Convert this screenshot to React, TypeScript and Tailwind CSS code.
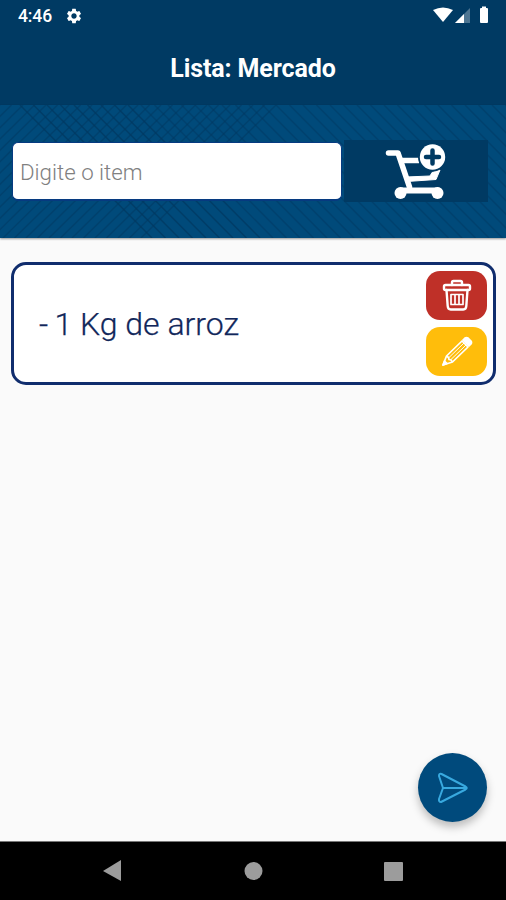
import { MdSettings } from "react-icons/md";

const range = (n: number) => Array.from({ length: n }, (_, i) => i);

function Hatching() {
  return (
    <svg className="absolute inset-0 h-full w-full" viewBox="0 0 506 133" preserveAspectRatio="none" fill="none" stroke="#003a63" strokeWidth="1.4" aria-hidden="true">
      <g opacity="0.55">
        {range(25).map((i) => (
          <path key={i} d={`M${i * 11.5} 0l-135 133`} />
        ))}
      </g>
      <g opacity="0.8">
        {range(9).map((i) => (
          <path key={i} d={`M${i * 13.5 + 20} 0l132 133`} />
        ))}
      </g>
      <g opacity="0.5">
        {range(28).map((i) => (
          <path key={i} d={`M${i * 13.5 + 141} 0l132 133`} />
        ))}
      </g>
    </svg>
  );
}

function StatusBar() {
  return (
    <div className="flex h-8 items-center justify-between pl-[18px] pr-4">
      <div className="flex items-center gap-[13px]">
        <span className="text-[17.5px] leading-8 font-medium tracking-[-0.1px]">4:46</span>
        <MdSettings className="h-[18px] w-[18px]" />
      </div>
      <svg className="h-5 w-[58px]" viewBox="0 0 58 20" fill="currentColor">
        <path d="M1 4Q11 -1 21 4L11 16Z" />
        <path d="M38 2V17H23Z" opacity=".3" />
        <path d="M32 8V17H23Z" />
        <path d="M49 2h1V.5h4V2h1q1 0 1 1v13q0 1-1 1h-6q-1 0-1-1V3q0-1 1-1Z" />
      </svg>
    </div>
  );
}

function CartIcon() {
  return (
    <svg className="h-[60px] w-[64px]" viewBox="0 0 64 60" fill="none" stroke="white" strokeWidth="5.5" strokeLinecap="round" strokeLinejoin="round">
      <path d="M4.500 12H14L25.500 46" />
      <path d="M17 19.500H35" strokeLinecap="butt" />
      <path d="M22 36L46 35L48 31.500L56 29L52 38.500L23 40.500Z" strokeWidth="1" fill="white" />
      <path d="M17 49.500H54" strokeWidth="6" />
      <circle cx="16.500" cy="52" r="6" fill="white" stroke="none" />
      <circle cx="53.500" cy="52" r="6" fill="white" stroke="none" />
      <circle cx="48.500" cy="16" r="14.500" fill="#003a63" stroke="none" />
      <circle cx="48.500" cy="16" r="12.700" fill="white" stroke="none" />
      <path d="M48.500 9.500v13M42 16h13" stroke="#003a63" strokeWidth="4.500" />
    </svg>
  );
}

function TrashIcon() {
  return (
    <svg className="h-8 w-8" viewBox="0 0 32 32" fill="none" stroke="white" strokeWidth="2.4" strokeLinecap="round" strokeLinejoin="round">
      <rect x="3" y="6" width="26" height="5" rx="1.5" />
      <path d="M11 6V3.500Q11 2 12.500 2h7Q21 2 21 3.500V6" />
      <path d="M5.500 11l1.200 16q.2 3.500 3 3.500h12.600q2.800 0 3-3.500l1.200-16" />
      <path d="M10 15.500v10h12v-10ZM14 15.500v10M18 15.500v10" strokeWidth="1.700" />
    </svg>
  );
}

function PencilIcon() {
  return (
    <svg className="h-8 w-8" viewBox="0 0 32 32" fill="none" stroke="white" strokeWidth="1.7" strokeLinejoin="round">
      <path d="M2 30l3.500-9L21 6l6 6L11.500 27Z" />
      <path d="M2 30l1.500-4 2.500 2.500Z" fill="white" />
      <path d="M5.500 21l2 1.500.5 2 2 .5 1.500 2" />
      <path d="M22 5l2-2q1.500-1 3 0l3 3q1 1.500 0 3l-2 2Z" fill="white" />
      <path d="M8 22.500L23 8M10 24.500L25 10" strokeWidth="1" />
    </svg>
  );
}

export default function App() {
  return (
    <div className="relative flex h-[900px] w-[506px] flex-col overflow-hidden bg-[#fafafa] font-[Roboto,sans-serif]">
      <header className="h-[105px] shrink-0 bg-[#003a63] text-white">
        <StatusBar />
        <h1 className="pt-[22px] text-center text-[25px] leading-[30px] font-bold tracking-[-0.1px]">Lista: Mercado</h1>
      </header>
      <section className="relative h-[133px] shrink-0 bg-[#004a7a] shadow-[0_1px_2px_rgba(0,0,0,0.4)]">
        <Hatching />
        <div className="relative flex items-start pt-[35px] pl-3">
          <input aria-label="Item" placeholder="Digite o item" className="mt-[2px] h-[59px] w-[330px] rounded-[6px] border border-b-2 border-[#063a80] bg-white px-[7px] pt-[2px] text-[22.3px] font-light outline-none placeholder:text-[#808080]" />
          <button aria-label="Adicionar item" className="ml-[2px] flex h-[62px] w-[144px] items-center justify-center bg-[#003a63]"><CartIcon /></button>
        </div>
      </section>
      <main className="flex-1 pt-6 pr-[10px] pl-[11px]">
        <article className="flex h-[123px] items-center justify-between rounded-[15px] border-[3px] border-[#102d6d] bg-white pr-[6px] pl-[25px]">
          <p className="pt-px text-[32px] leading-10 font-light text-[#11275b] [-webkit-text-stroke:0.25px_#11275b]"><span className="tracking-[-0.8px]">- </span>1 Kg de arroz</p>
          <div className="flex flex-col gap-[7px]">
            <button aria-label="Excluir" className="flex h-[49px] w-[61px] items-center justify-center rounded-[14px] bg-[#bf3028] pb-px"><TrashIcon /></button>
            <button aria-label="Editar" className="flex h-[49px] w-[61px] items-center justify-center rounded-[14px] bg-[#ffbd0b] pb-[2px]"><PencilIcon /></button>
          </div>
        </article>
      </main>
      <button aria-label="Enviar" className="absolute top-[753px] left-[418px] flex h-[69px] w-[69px] items-center justify-center rounded-full bg-[#004a7c] shadow-[0_5px_9px_rgba(0,0,0,0.25)]">
        <svg className="h-8 w-8" viewBox="0 0 32 32" fill="none" stroke="#38a9df" strokeWidth="2" strokeLinecap="round" strokeLinejoin="round">
          <path d="M4.500 2Q2 1 2 4l4 12-4 11q-.4 3 2 3L28.500 17.500q2.500-1.500 0-3ZM6 16h22" />
        </svg>
      </button>
      <nav className="flex h-[59px] shrink-0 items-center border-t border-[#777] bg-black text-[#9c9c9c]">
        <svg className="h-full w-full" viewBox="0 0 506 58" fill="currentColor">
          <path d="M103 29l18-11v21Z" /><circle cx="253.500" cy="29" r="9" /><rect x="384" y="20" width="19" height="19" rx="1" />
        </svg>
      </nav>
    </div>
  );
}
